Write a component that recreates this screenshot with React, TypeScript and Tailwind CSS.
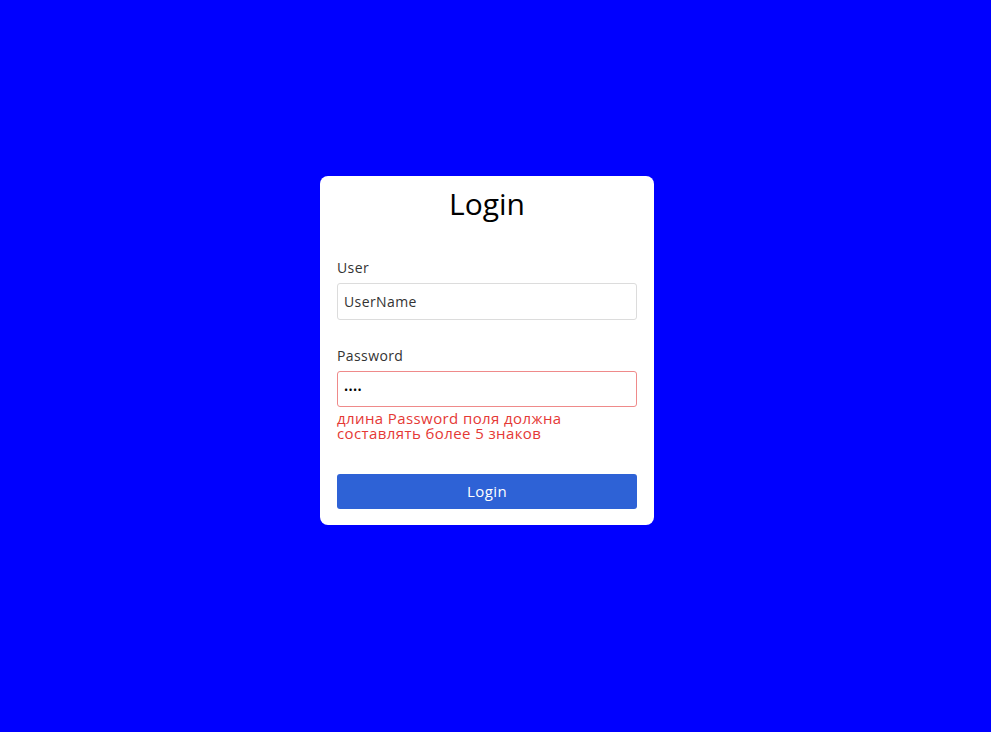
export default function App() {
  return (
    <div
      className="flex min-h-screen justify-center bg-[#0000ff] pr-[17px] pt-[176px]"
      style={{ fontFamily: '"Open Sans", "Noto Sans", sans-serif' }}
    >
      <form className="flex h-fit w-[334px] flex-col rounded-lg bg-white px-[17px] pb-[16px] pt-[10px] tracking-[0.4px]">
        <h1 className="text-center text-[30px] font-normal leading-[36px] tracking-normal text-black">Login</h1>

        <label className="mt-[36px] text-[14px] leading-[20px] text-[#333]">User</label>
        <input
          type="text"
          defaultValue="UserName"
          className="mt-[5px] h-[37px] rounded-[3px] border border-[#dcdcdc] px-[6px] text-[14px] tracking-[0.4px] text-[#333] outline-none"
        />

        <label className="mt-[26px] text-[14px] leading-[20px] text-[#333]">Password</label>
        <input
          type="password"
          defaultValue="1234"
          className="mt-[5px] h-[36px] rounded-[3px] border border-[#ef8a8a] px-[6px] text-[11px] text-black outline-none"
        />
        <p className="mt-[4px] text-[15px] leading-[15px] text-[#e53935]">
          длина Password поля должна составлять более 5 знаков
        </p>

        <button
          type="button"
          className="mt-[33px] h-[35px] rounded-[3px] bg-[#2e62d6] text-[15px] tracking-[0.4px] text-white"
        >
          Login
        </button>
      </form>
    </div>
  );
}
